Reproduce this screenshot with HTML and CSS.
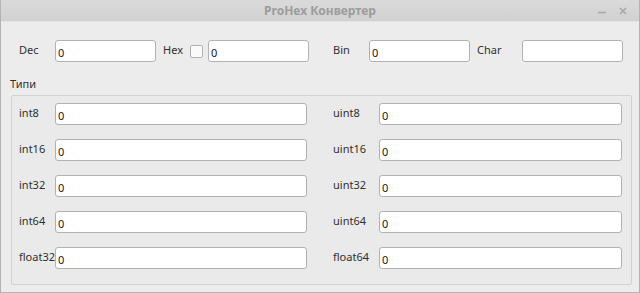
FILE: index.html
```html
<!DOCTYPE html>
<html>
<head lang="uk">
    <meta charset="UTF-8">
    <title>ProHex Конвертер</title>
    <link rel="stylesheet" href="styles.css">
</head>
<body>
<div class="window">
    <div class="titlebar">
        <span class="title">ProHex Конвертер</span>
        <span class="btns">
            <svg width="8" height="8" viewBox="0 0 8 8"><path d="M0 5.5h8" stroke="#a8a8a8" stroke-width="1.6"/></svg>
            <svg width="8" height="8" viewBox="0 0 8 8"><path d="M1 1l6 6M7 1l-6 6" stroke="#a8a8a8" stroke-width="1.6"/></svg>
        </span>
    </div>
    <div class="content">
        <div class="toprow">
            <label class="lbl w36">Dec</label>
            <input class="field" type="text" value="0">
            <label class="lbl w27 ml7">Hex</label>
            <span class="check"></span>
            <input class="field" type="text" value="0">
            <label class="lbl w36 ml24">Bin</label>
            <input class="field" type="text" value="0">
            <label class="lbl w45 ml7">Char</label>
            <input class="field" type="text" value="">
        </div>
        <div class="grouptitle">Типи</div>
        <div class="group">
            <div class="row">
                <label class="lbl w36">int8</label>
                <input class="field left" type="text" value="0">
                <label class="lbl w46 ml26">uint8</label>
                <input class="field right" type="text" value="0">
            </div>
            <div class="row">
                <label class="lbl w36">int16</label>
                <input class="field left" type="text" value="0">
                <label class="lbl w46 ml26">uint16</label>
                <input class="field right" type="text" value="0">
            </div>
            <div class="row">
                <label class="lbl w36">int32</label>
                <input class="field left" type="text" value="0">
                <label class="lbl w46 ml26">uint32</label>
                <input class="field right" type="text" value="0">
            </div>
            <div class="row">
                <label class="lbl w36">int64</label>
                <input class="field left" type="text" value="0">
                <label class="lbl w46 ml26">uint64</label>
                <input class="field right" type="text" value="0">
            </div>
            <div class="row">
                <label class="lbl w36">float32</label>
                <input class="field left" type="text" value="0">
                <label class="lbl w46 ml26">float64</label>
                <input class="field right" type="text" value="0">
            </div>
        </div>
    </div>
</div>
</body>
</html>
```

FILE: styles.css
```css
* {
    margin: 0;
    padding: 0;
    box-sizing: border-box;
}

body {
    font-family: "Noto Sans", "Open Sans", sans-serif;
    font-size: 11px;
    color: #303030;
    background: #ececec;
}

.window {
    width: 640px;
    height: 293px;
    border: 1px solid #b4b4b4;
    border-top: none;
    background: #ececec;
    display: flex;
    flex-direction: column;
}

.titlebar {
    height: 22px;
    background: linear-gradient(#dadada, #d1d1d1);
    border-bottom: 1px solid #e4e4e4;
    display: flex;
    align-items: center;
    justify-content: center;
    position: relative;
}

.title {
    font-weight: bold;
    font-size: 12px;
    color: #9c9c9c;
}

.btns {
    position: absolute;
    right: 12px;
    top: 7px;
    display: flex;
    gap: 13px;
}

.content {
    padding: 18px 9px 0 9px;
}

.toprow {
    display: flex;
    align-items: center;
    padding-left: 9px;
    height: 22px;
}

.lbl {
    display: block;
    flex: none;
    white-space: nowrap;
    line-height: 16px;
    margin-top: -2px;
}

.w27 { width: 27px; }
.w36 { width: 36px; }
.w45 { width: 45px; }
.w46 { width: 46px; }
.ml7 { margin-left: 7px; }
.ml24 { margin-left: 24px; }
.ml26 { margin-left: 26px; }

.field {
    flex: none;
    width: 101px;
    height: 22px;
    border: 1px solid #b2b2b2;
    border-radius: 3px;
    background: #fff;
    font-family: "Noto Sans", "Open Sans", sans-serif;
    font-size: 11px;
    color: #202020;
    padding: 2px 3px 0 2px;
    outline: none;
}

.field.left { width: 252px; }
.field.right { width: 243px; }

.check {
    flex: none;
    width: 13px;
    height: 13px;
    border: 1px solid #b2b2b2;
    border-radius: 2px;
    background: #fafafa;
    margin-right: 5px;
}

.grouptitle {
    margin-top: 13px;
    height: 20px;
    line-height: 17px;
}

.group {
    margin-left: 1px;
    width: 621px;
    height: 190px;
    border: 1px solid #d2d2d2;
    border-radius: 2px;
    background: #eaeaea;
    padding: 7px 8px 0 7px;
    display: flex;
    flex-direction: column;
    gap: 14px;
}

.row {
    display: flex;
    align-items: center;
    height: 22px;
}
```
